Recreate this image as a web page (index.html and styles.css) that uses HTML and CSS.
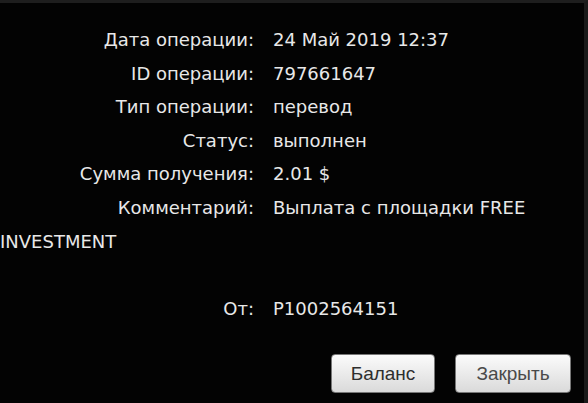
FILE: index.html
```html
<!DOCTYPE html>
<html lang="ru">
<head>
  <meta charset="UTF-8" />
  <title>Информация об операции</title>
  <link rel="stylesheet" href="styles.css">
</head>
<body>
  <div class="dialog">
    <div class="details">
      <div class="row"><span class="label">Дата операции:</span>24 Май 2019 12:37</div>
      <div class="row"><span class="label">ID операции:</span>797661647</div>
      <div class="row"><span class="label">Тип операции:</span>перевод</div>
      <div class="row"><span class="label">Статус:</span>выполнен</div>
      <div class="row"><span class="label">Сумма получения:</span>2.01 $</div>
      <div class="row"><span class="label">Комментарий:</span>Выплата с площадки FREE INVESTMENT</div>
      <div class="row spacer"></div>
      <div class="row"><span class="label">От:</span>P1002564151</div>
    </div>
    <div class="buttons">
      <button type="button">Баланс</button>
      <button type="button" class="wide">Закрыть</button>
    </div>
  </div>
</body>
</html>
```
FILE: styles.css
```css
body {
  margin: 0;
  background: #000;
}

.dialog {
  height: 400px;
  background: #030303;
  border-top: 3px solid #1e1e1e;
  border-right: 4px solid #1a1a1a;
  overflow: hidden;
}

.details {
  padding-top: 20px;
  font-family: 'DejaVu Sans', sans-serif;
  font-size: 18px;
  line-height: 33.6px;
  color: #e8e8e8;
}

.row {
  min-height: 33.6px;
}

.label {
  display: inline-block;
  width: 254px;
  margin-right: 19px;
  text-align: right;
}

.buttons {
  display: flex;
  justify-content: flex-end;
  gap: 20px;
  padding: 29px 13px 0 0;
}

button {
  width: 104px;
  height: 39px;
  font-family: 'Liberation Sans', Arial, sans-serif;
  font-size: 19px;
  color: #2e2e2e;
  background: linear-gradient(#fbfbfb, #dadada);
  border: 1px solid #777;
  border-radius: 4px;
  cursor: pointer;
}

button.wide {
  width: 116px;
  color: #4a4a4a;
}
```
